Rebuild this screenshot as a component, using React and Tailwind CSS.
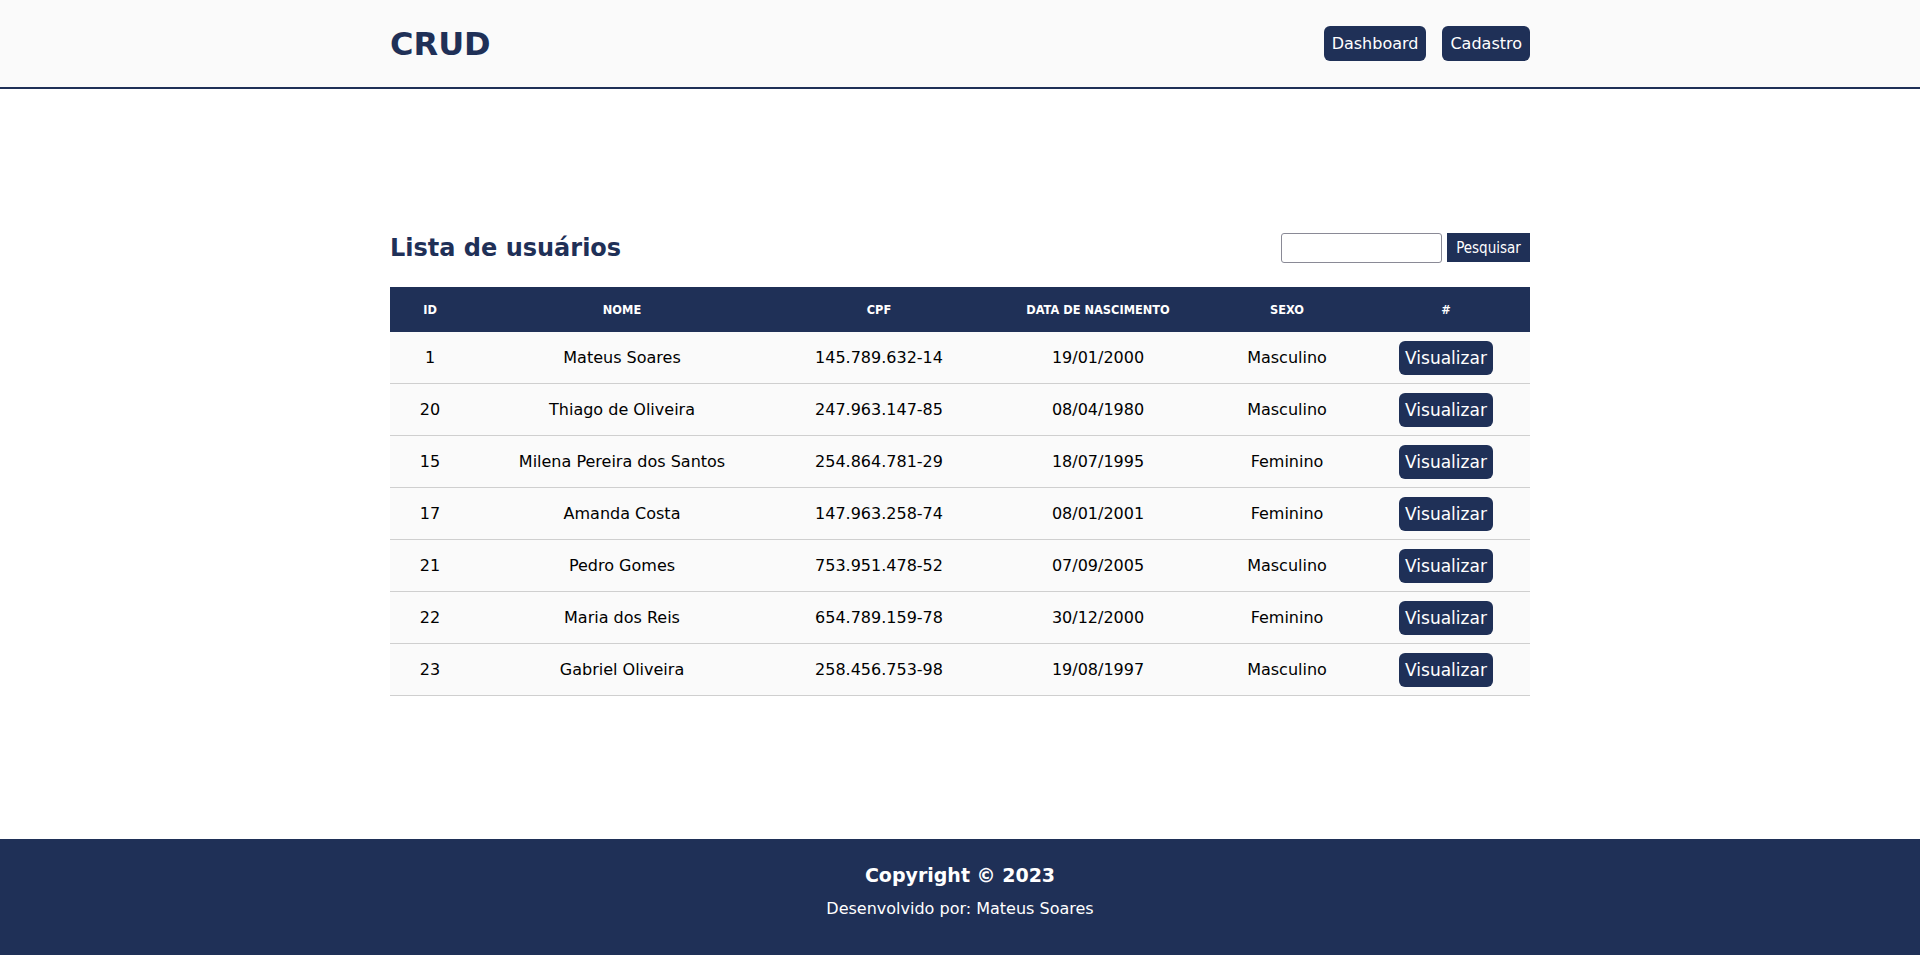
const usuarios = [
  { id: 1, nome: "Mateus Soares", cpf: "145.789.632-14", nascimento: "19/01/2000", sexo: "Masculino" },
  { id: 20, nome: "Thiago de Oliveira", cpf: "247.963.147-85", nascimento: "08/04/1980", sexo: "Masculino" },
  { id: 15, nome: "Milena Pereira dos Santos", cpf: "254.864.781-29", nascimento: "18/07/1995", sexo: "Feminino" },
  { id: 17, nome: "Amanda Costa", cpf: "147.963.258-74", nascimento: "08/01/2001", sexo: "Feminino" },
  { id: 21, nome: "Pedro Gomes", cpf: "753.951.478-52", nascimento: "07/09/2005", sexo: "Masculino" },
  { id: 22, nome: "Maria dos Reis", cpf: "654.789.159-78", nascimento: "30/12/2000", sexo: "Feminino" },
  { id: 23, nome: "Gabriel Oliveira", cpf: "258.456.753-98", nascimento: "19/08/1997", sexo: "Masculino" },
];

const cols = "grid grid-cols-[80px_304px_210px_228px_150px_168px]";

const App = () => {
  return (
    <div className="min-h-screen flex flex-col bg-white font-['DejaVu_Sans',Verdana,sans-serif] text-black leading-[normal]">
      {/* Header */}
      <header className="bg-[#fafafa] border-b-2 border-[#1f3057]">
        <div className="w-[1140px] mx-auto h-[87px] flex items-center justify-between">
          <h1 className="text-[32px] font-bold text-[#1f3057] leading-[normal]">CRUD</h1>
          <nav className="flex gap-4">
            <button className="bg-[#1f3057] text-white text-base px-2 py-2 rounded-md leading-[normal]">
              Dashboard
            </button>
            <button className="bg-[#1f3057] text-white text-base px-2 py-2 rounded-md leading-[normal]">
              Cadastro
            </button>
          </nav>
        </div>
      </header>

      {/* Conteúdo */}
      <main className="flex-1 pt-[143px] pb-[143px]">
        <div className="w-[1140px] mx-auto">
          <div className="flex items-center justify-between h-[31px] mb-[24px]">
            <h2 className="text-2xl font-bold text-[#1f3057] leading-[normal]">Lista de usuários</h2>
            <div className="flex items-center gap-[5px]">
              <input
                type="text"
                className="w-[161px] h-[30px] border border-[#8a8a96] rounded-[3px] bg-white px-1"
              />
              <button className="w-[83px] h-[29px] bg-[#1f3057] text-white text-[15px] font-['DejaVu_Sans_Condensed','DejaVu_Sans',sans-serif] leading-[normal]">
                Pesquisar
              </button>
            </div>
          </div>

          <div className="flex flex-col">
            <div className={`${cols} h-[45px] bg-[#1f3057] text-white text-[11.4px] font-bold items-center text-center`}>
              <div>ID</div>
              <div>NOME</div>
              <div>CPF</div>
              <div>DATA DE NASCIMENTO</div>
              <div>SEXO</div>
              <div>#</div>
            </div>
            {usuarios.map((u) => (
              <div
                key={u.id}
                className={`${cols} h-[52px] bg-[#fafafa] border-b border-[#cfcfcf] items-center text-center text-base`}
              >
                <div>{u.id}</div>
                <div>{u.nome}</div>
                <div>{u.cpf}</div>
                <div>{u.nascimento}</div>
                <div>{u.sexo}</div>
                <div className="flex justify-center">
                  <button className="bg-[#1f3057] text-white text-[17px] px-[6px] py-[7px] rounded-md leading-[normal]">
                    Visualizar
                  </button>
                </div>
              </div>
            ))}
          </div>
        </div>
      </main>

      {/* Rodapé */}
      <footer className="bg-[#1f3057] text-white text-center h-[117px] pt-[25px]">
        <p className="text-[19px] font-bold leading-[normal]">Copyright © 2023</p>
        <p className="text-base mt-[13px] leading-[normal]">Desenvolvido por: Mateus Soares</p>
      </footer>
    </div>
  );
};

export default App;
